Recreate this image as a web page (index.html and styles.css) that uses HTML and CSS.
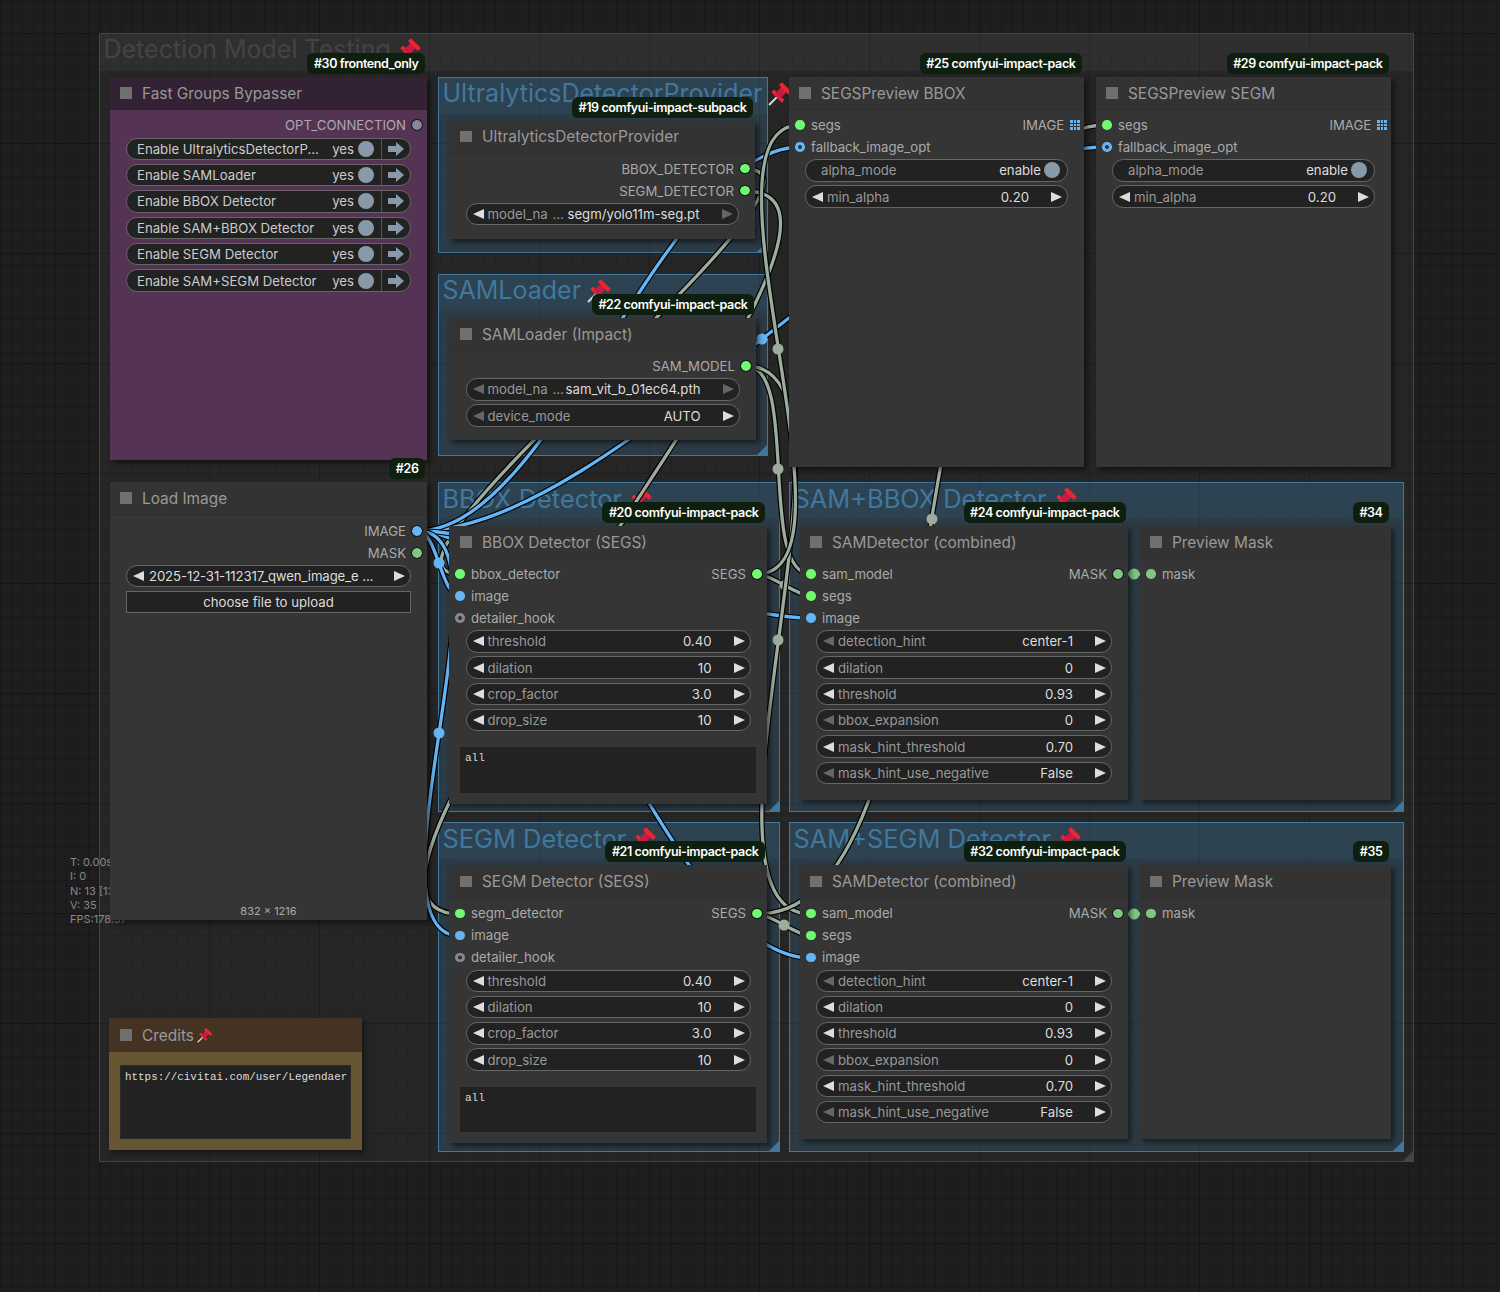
FILE: index.html
```html
<!DOCTYPE html>
<html lang="en">
<head>
<meta charset="utf-8">
<title>Detection Model Testing</title>
<link rel="stylesheet" href="styles.css">
</head>
<body>
<svg class="defs" aria-hidden="true">
  <symbol id="pin" viewBox="0 0 24 24">
    <line x1="1" y1="23" x2="9" y2="15" stroke="#d8d8d8" stroke-width="2"/>
    <line x1="4.5" y1="9.5" x2="14.5" y2="19.5" stroke="#f0242f" stroke-width="3.6"/>
    <line x1="9" y1="14.5" x2="16" y2="7.5" stroke="#c41c44" stroke-width="7"/>
    <line x1="12" y1="2.5" x2="21.5" y2="12" stroke="#f0242f" stroke-width="4"/>
  </symbol>
  <symbol id="go" viewBox="0 0 16 14">
    <path d="M0 4h8V0l8 7-8 7v-4H0z"/>
  </symbol>
</svg>
<main class="canvas">
  <section class="group outer g-main"><h2>Detection Model Testing<svg class="pin"><use href="#pin"/></svg></h2><i class="corner"></i></section>
  <section class="group g-ultra"><h2>UltralyticsDetectorProvider<svg class="pin"><use href="#pin"/></svg></h2><i class="corner"></i></section>
  <section class="group g-sam"><h2>SAMLoader<svg class="pin"><use href="#pin"/></svg></h2><i class="corner"></i></section>
  <section class="group g-bbox"><h2>BBOX Detector<svg class="pin"><use href="#pin"/></svg></h2><i class="corner"></i></section>
  <section class="group g-sambbox"><h2>SAM+BBOX Detector<svg class="pin"><use href="#pin"/></svg></h2><i class="corner"></i></section>
  <section class="group g-segm"><h2>SEGM Detector<svg class="pin"><use href="#pin"/></svg></h2><i class="corner"></i></section>
  <section class="group g-samsegm"><h2>SAM+SEGM Detector<svg class="pin"><use href="#pin"/></svg></h2><i class="corner"></i></section>

  <div class="stats"><div>T: 0.00s</div><div>I: 0</div><div>N: 13 [13]</div><div>V: 35</div><div>FPS:178.57</div></div>

  <svg class="links" viewBox="0 0 1500 1292" aria-hidden="true">
    <defs>
      <path id="b1" d="M418 531C437 531 441 596 460 596"/>
      <path id="b2" d="M418 531C520 531 358 936 460 936"/>
      <path id="b3" d="M418 531C518 531 710 618 811 618"/>
      <path id="b4" d="M418 531C563 531 666 958 811 958"/>
      <path id="b5" d="M418 531C553 531 665 147 800 147"/>
      <path id="b6" d="M418 531C615 531 909 147 1106 147"/>
      <path id="g1" d="M745 169C869 169 336 574 460 574"/>
      <path id="g2" d="M745 191C939 191 266 914 460 914"/>
      <path id="g3" d="M746 366C800 366 757 574 811 574"/>
      <path id="g4" d="M746 366C884 366 673 914 811 914"/>
      <path id="g5" d="M757 574C771 574 797 596 811 596"/>
      <path id="g6" d="M757 574C870 574 687 125 800 125"/>
      <path id="g7" d="M757 914C771 914 797 936 811 936"/>
      <path id="g8" d="M757 914C973 914 890 125 1106 125"/>
      <path id="m1" d="M1118 574H1150"/>
      <path id="m2" d="M1118 914H1150"/>
    </defs>
    <g class="wire-sage">
      <use class="casing" href="#g5"/><use href="#g5"/><circle cx="784" cy="585" r="4.5"/>
      <use class="casing" href="#g1"/><use href="#g1"/>
      <use class="casing" href="#g2"/><use href="#g2"/>
    </g>
    <g class="wire-blue">
      <use class="casing" href="#b6"/><use href="#b6"/>
      <use class="casing" href="#b5"/><use href="#b5"/>
      <use class="casing" href="#b4"/><use href="#b4"/>
      <use class="casing" href="#b3"/><use href="#b3"/>
      <use class="casing" href="#b2"/><use href="#b2"/>
      <use class="casing" href="#b1"/><use href="#b1"/>
    </g>
    <g class="wire-sage">
      <use class="casing" href="#g3"/><use href="#g3"/>
      <use class="casing" href="#g4"/><use href="#g4"/>
      <use class="casing" href="#g6"/><use href="#g6"/>
      <use class="casing" href="#g8"/><use href="#g8"/>
      <use class="casing" href="#g7"/><use href="#g7"/>
      <circle cx="778" cy="469" r="5.5"/>
      <circle cx="778" cy="640" r="5.5"/>
      <circle cx="778" cy="349" r="5.5"/>
      <circle cx="784" cy="925" r="5.5"/>
      <circle cx="932" cy="519" r="5.5"/>
    </g>
    <g class="wire-blue">
      <circle cx="762" cy="339" r="5.5"/>
      <circle cx="439" cy="733" r="5.5"/>
      <circle cx="439" cy="563" r="5.5"/>
    </g>
    <g class="wire-mask">
      <use href="#m1"/><circle cx="1134" cy="574" r="5.5"/>
      <use href="#m2"/><circle cx="1134" cy="914" r="5.5"/>
    </g>
  </svg>

  <article class="node purple n-fast">
    <header><i class="box"></i>Fast Groups Bypasser</header>
    <span class="badge">#30 frontend_only</span>
    <div class="slots">
      <div class="slot out"><span>OPT_CONNECTION</span><i class="dot ring grey"></i></div>
    </div>
    <div class="widgets">
      <div class="w bypass"><span class="name">Enable UltralyticsDetectorP...</span><span class="val">yes</span><i class="knob"></i><i class="split"></i><svg class="go"><use href="#go"/></svg></div>
      <div class="w bypass"><span class="name">Enable SAMLoader</span><span class="val">yes</span><i class="knob"></i><i class="split"></i><svg class="go"><use href="#go"/></svg></div>
      <div class="w bypass"><span class="name">Enable BBOX Detector</span><span class="val">yes</span><i class="knob"></i><i class="split"></i><svg class="go"><use href="#go"/></svg></div>
      <div class="w bypass"><span class="name">Enable SAM+BBOX Detector</span><span class="val">yes</span><i class="knob"></i><i class="split"></i><svg class="go"><use href="#go"/></svg></div>
      <div class="w bypass"><span class="name">Enable SEGM Detector</span><span class="val">yes</span><i class="knob"></i><i class="split"></i><svg class="go"><use href="#go"/></svg></div>
      <div class="w bypass"><span class="name">Enable SAM+SEGM Detector</span><span class="val">yes</span><i class="knob"></i><i class="split"></i><svg class="go"><use href="#go"/></svg></div>
    </div>
  </article>

  <article class="node n-ultra">
    <header><i class="box"></i>UltralyticsDetectorProvider</header>
    <span class="badge">#19 comfyui-impact-subpack</span>
    <div class="slots">
      <div class="slot out"><span>BBOX_DETECTOR</span><i class="dot ring green"></i></div>
      <div class="slot out"><span>SEGM_DETECTOR</span><i class="dot ring green"></i></div>
    </div>
    <div class="widgets">
      <div class="w"><i class="al"></i><span class="label">model_na</span><span class="more">…</span><span class="val">segm/yolo11m-seg.pt</span><i class="ar off"></i></div>
    </div>
  </article>

  <article class="node n-samload">
    <header><i class="box"></i>SAMLoader (Impact)</header>
    <span class="badge">#22 comfyui-impact-pack</span>
    <div class="slots">
      <div class="slot out"><span>SAM_MODEL</span><i class="dot ring green"></i></div>
    </div>
    <div class="widgets">
      <div class="w"><i class="al off"></i><span class="label">model_na</span><span class="more">…</span><span class="val">sam_vit_b_01ec64.pth</span><i class="ar off"></i></div>
      <div class="w"><i class="al off"></i><span class="label">device_mode</span><span class="val">AUTO</span><i class="ar"></i></div>
    </div>
  </article>

  <article class="node n-prev1">
    <header><i class="box"></i>SEGSPreview BBOX</header>
    <span class="badge">#25 comfyui-impact-pack</span>
    <div class="slots">
      <div class="slot both"><i class="dot green"></i><span>segs</span><span class="right">IMAGE</span><i class="grid"></i></div>
      <div class="slot"><i class="dot donut blue"></i><span>fallback_image_opt</span></div>
    </div>
    <div class="widgets">
      <div class="w flip"><span class="label">alpha_mode</span><span class="val">enable</span><i class="knob"></i></div>
      <div class="w"><i class="al"></i><span class="label">min_alpha</span><span class="val">0.20</span><i class="ar"></i></div>
    </div>
  </article>

  <article class="node n-prev2">
    <header><i class="box"></i>SEGSPreview SEGM</header>
    <span class="badge">#29 comfyui-impact-pack</span>
    <div class="slots">
      <div class="slot both"><i class="dot green"></i><span>segs</span><span class="right">IMAGE</span><i class="grid"></i></div>
      <div class="slot"><i class="dot donut blue"></i><span>fallback_image_opt</span></div>
    </div>
    <div class="widgets">
      <div class="w flip"><span class="label">alpha_mode</span><span class="val">enable</span><i class="knob"></i></div>
      <div class="w"><i class="al"></i><span class="label">min_alpha</span><span class="val">0.20</span><i class="ar"></i></div>
    </div>
  </article>

  <article class="node n-load">
    <header><i class="box"></i>Load Image</header>
    <span class="badge">#26</span>
    <div class="slots">
      <div class="slot out"><span>IMAGE</span><i class="dot ring blue"></i></div>
      <div class="slot out"><span>MASK</span><i class="dot ring mask"></i></div>
    </div>
    <div class="widgets">
      <div class="w"><i class="al"></i><span class="file">2025-12-31-112317_qwen_image_e ...</span><i class="ar"></i></div>
      <div class="upload">choose file to upload</div>
    </div>
    <div class="size">832 × 1216</div>
  </article>

  <article class="node n-bbox">
    <header><i class="box"></i>BBOX Detector (SEGS)</header>
    <span class="badge">#20 comfyui-impact-pack</span>
    <div class="slots">
      <div class="slot both"><i class="dot green"></i><span>bbox_detector</span><span class="right">SEGS</span><i class="dot ring green"></i></div>
      <div class="slot"><i class="dot blue"></i><span>image</span></div>
      <div class="slot"><i class="dot donut grey"></i><span>detailer_hook</span></div>
    </div>
    <div class="widgets">
      <div class="w"><i class="al"></i><span class="label">threshold</span><span class="val">0.40</span><i class="ar"></i></div>
      <div class="w"><i class="al"></i><span class="label">dilation</span><span class="val">10</span><i class="ar"></i></div>
      <div class="w"><i class="al"></i><span class="label">crop_factor</span><span class="val">3.0</span><i class="ar"></i></div>
      <div class="w"><i class="al"></i><span class="label">drop_size</span><span class="val">10</span><i class="ar"></i></div>
    </div>
    <div class="text">all</div>
  </article>

  <article class="node n-sam1">
    <header><i class="box"></i>SAMDetector (combined)</header>
    <span class="badge">#24 comfyui-impact-pack</span>
    <div class="slots">
      <div class="slot both"><i class="dot green"></i><span>sam_model</span><span class="right">MASK</span><i class="dot ring mask"></i></div>
      <div class="slot"><i class="dot green"></i><span>segs</span></div>
      <div class="slot"><i class="dot blue"></i><span>image</span></div>
    </div>
    <div class="widgets">
      <div class="w"><i class="al off"></i><span class="label">detection_hint</span><span class="val">center-1</span><i class="ar"></i></div>
      <div class="w"><i class="al"></i><span class="label">dilation</span><span class="val">0</span><i class="ar"></i></div>
      <div class="w"><i class="al"></i><span class="label">threshold</span><span class="val">0.93</span><i class="ar"></i></div>
      <div class="w"><i class="al off"></i><span class="label">bbox_expansion</span><span class="val">0</span><i class="ar"></i></div>
      <div class="w"><i class="al"></i><span class="label">mask_hint_threshold</span><span class="val">0.70</span><i class="ar"></i></div>
      <div class="w"><i class="al off"></i><span class="label">mask_hint_use_negative</span><span class="val">False</span><i class="ar"></i></div>
    </div>
  </article>

  <article class="node n-mask1">
    <header><i class="box"></i>Preview Mask</header>
    <span class="badge">#34</span>
    <div class="slots">
      <div class="slot"><i class="dot mask"></i><span>mask</span></div>
    </div>
  </article>

  <article class="node n-segm">
    <header><i class="box"></i>SEGM Detector (SEGS)</header>
    <span class="badge">#21 comfyui-impact-pack</span>
    <div class="slots">
      <div class="slot both"><i class="dot green"></i><span>segm_detector</span><span class="right">SEGS</span><i class="dot ring green"></i></div>
      <div class="slot"><i class="dot blue"></i><span>image</span></div>
      <div class="slot"><i class="dot donut grey"></i><span>detailer_hook</span></div>
    </div>
    <div class="widgets">
      <div class="w"><i class="al"></i><span class="label">threshold</span><span class="val">0.40</span><i class="ar"></i></div>
      <div class="w"><i class="al"></i><span class="label">dilation</span><span class="val">10</span><i class="ar"></i></div>
      <div class="w"><i class="al"></i><span class="label">crop_factor</span><span class="val">3.0</span><i class="ar"></i></div>
      <div class="w"><i class="al"></i><span class="label">drop_size</span><span class="val">10</span><i class="ar"></i></div>
    </div>
    <div class="text">all</div>
  </article>

  <article class="node n-sam2">
    <header><i class="box"></i>SAMDetector (combined)</header>
    <span class="badge">#32 comfyui-impact-pack</span>
    <div class="slots">
      <div class="slot both"><i class="dot green"></i><span>sam_model</span><span class="right">MASK</span><i class="dot ring mask"></i></div>
      <div class="slot"><i class="dot green"></i><span>segs</span></div>
      <div class="slot"><i class="dot blue"></i><span>image</span></div>
    </div>
    <div class="widgets">
      <div class="w"><i class="al off"></i><span class="label">detection_hint</span><span class="val">center-1</span><i class="ar"></i></div>
      <div class="w"><i class="al"></i><span class="label">dilation</span><span class="val">0</span><i class="ar"></i></div>
      <div class="w"><i class="al"></i><span class="label">threshold</span><span class="val">0.93</span><i class="ar"></i></div>
      <div class="w"><i class="al off"></i><span class="label">bbox_expansion</span><span class="val">0</span><i class="ar"></i></div>
      <div class="w"><i class="al"></i><span class="label">mask_hint_threshold</span><span class="val">0.70</span><i class="ar"></i></div>
      <div class="w"><i class="al off"></i><span class="label">mask_hint_use_negative</span><span class="val">False</span><i class="ar"></i></div>
    </div>
  </article>

  <article class="node n-mask2">
    <header><i class="box"></i>Preview Mask</header>
    <span class="badge">#35</span>
    <div class="slots">
      <div class="slot"><i class="dot mask"></i><span>mask</span></div>
    </div>
  </article>

  <article class="node brown n-credits">
    <header><i class="box"></i>Credits<svg class="pin small"><use href="#pin"/></svg></header>
    <div class="text">https://civitai.com/user/Legendaer</div>
  </article>
</main>
</body>
</html>
```

FILE: styles.css
```css
* { box-sizing: border-box; }
html, body { margin: 0; padding: 0; background: #1d1d1d; }
.defs { position: absolute; width: 0; height: 0; }

.canvas {
  position: relative;
  width: 1500px;
  height: 1292px;
  overflow: hidden;
  font-family: Inter, "Liberation Sans", sans-serif;
  background-color: #1e1e1e;
  background-image:
    linear-gradient(#151515 1px, transparent 1px),
    linear-gradient(90deg, #151515 1px, transparent 1px),
    linear-gradient(#191919 1px, transparent 1px),
    linear-gradient(90deg, #191919 1px, transparent 1px);
  background-size: 110px 110px, 110px 110px, 11px 11px, 11px 11px;
  background-position: 0 33px, 99px 0, 0 0, 0 0;
}

/* groups */
.group {
  position: absolute;
  border: 1.5px solid #3f789e;
  background: rgba(63, 120, 158, .27);
}
.group h2 {
  display: flex;
  align-items: center;
  height: 36px;
  margin: 0;
  padding: 0 0 5px 3.5px;
  font-size: 25px;
  font-weight: 400;
  line-height: 31px;
  color: #3f789e;
  background: rgba(63, 120, 158, .14);
  white-space: nowrap;
}
.g-bbox h2, .g-sambbox h2, .g-segm h2, .g-samsegm h2 { font-size: 25.4px; }
.group .corner {
  position: absolute;
  right: -1px;
  bottom: -1px;
  width: 12px;
  height: 12px;
  background: #3f789e;
  clip-path: polygon(100% 0, 100% 100%, 0 100%);
}
.pin { width: 25px; height: 25px; margin-left: 6px; flex: none; }
.pin.small { width: 16px; height: 16px; margin-left: 3px; }

.outer { border-color: #444; background: rgba(150, 150, 150, .07); }
.outer h2 { color: #444; background: rgba(150, 150, 150, .08); height: 37px; padding-bottom: 6px; }
.outer .corner { background: #444; }

.g-main { left: 99px; top: 33px; width: 1315px; height: 1129px; }
.g-ultra { left: 438px; top: 77px; width: 330px; height: 176px; }
.g-sam { left: 438px; top: 274px; width: 330px; height: 182px; }
.g-bbox { left: 438px; top: 482px; width: 342px; height: 330px; }
.g-sambbox { left: 789px; top: 482px; width: 615px; height: 330px; }
.g-segm { left: 438px; top: 822px; width: 342px; height: 330px; }
.g-samsegm { left: 789px; top: 822px; width: 615px; height: 330px; }

.stats {
  position: absolute;
  left: 70px;
  top: 855px;
  font-size: 11px;
  line-height: 14.3px;
  color: #888;
}

/* links */
.links { position: absolute; left: 0; top: 0; width: 1500px; height: 1292px; fill: none; stroke-width: 3.3px; }
.links .casing { stroke: #000; stroke-width: 5.6px; }
.wire-blue { stroke: #64b5f6; }
.wire-blue circle { fill: #64b5f6; stroke: none; }
.wire-sage { stroke: #9dad9d; }
.wire-sage circle { fill: #9dad9d; stroke: none; }
.wire-mask { stroke: #81c784; }
.wire-mask circle { fill: #81c784; stroke: none; }

/* nodes */
.node {
  position: absolute;
  display: flex;
  flex-direction: column;
  font-size: 13.2px;
  color: #aaa;
  background: #353535;
  box-shadow: 3px 3px 5px rgba(0, 0, 0, .5);
}
.node header {
  display: flex;
  align-items: center;
  flex: none;
  height: 33px;
  padding-left: 10px;
  font-size: 15.4px;
  color: #999;
  background: #333;
  border-bottom: 1px solid #2e2e2e;
  white-space: nowrap;
}
.n-ultra header, .n-samload header, .n-bbox header, .n-segm header { padding-left: 11px; }
.box { width: 11.5px; height: 11.5px; margin-right: 10.5px; background: #707070; flex: none; }

.purple { background: #553355; }
.purple header { background: #332233; border-bottom-color: #2e1e2e; }
.brown { background: #665533; }
.brown header { height: 34px; padding: 1px 0 0 11px; background: #443322; border-bottom-color: #3e2e1e; }

.n-fast { left: 110px; top: 77px; width: 317px; height: 383px; }
.n-ultra { left: 449px; top: 120.5px; width: 306px; height: 118.5px; }
.n-samload { left: 449px; top: 318px; width: 307px; height: 122px; }
.n-prev1 { left: 789px; top: 77px; width: 295px; height: 390px; }
.n-prev2 { left: 1096px; top: 77px; width: 295px; height: 390px; }
.n-load { left: 110px; top: 482px; width: 317px; height: 438px; }
.n-bbox { left: 449px; top: 526px; width: 318px; height: 278px; }
.n-sam1 { left: 800px; top: 526px; width: 328px; height: 274px; }
.n-mask1 { left: 1140px; top: 526px; width: 251px; height: 274px; }
.n-segm { left: 449px; top: 865.4px; width: 318px; height: 277.6px; }
.n-sam2 { left: 800px; top: 865.4px; width: 328px; height: 273.6px; }
.n-mask2 { left: 1140px; top: 865.4px; width: 251px; height: 273.6px; }
.n-credits { left: 109px; top: 1018px; width: 253px; height: 132px; box-shadow: 3px 3px 5px rgba(0, 0, 0, .4); }

.badge {
  position: absolute;
  right: 2px;
  bottom: calc(100% + 3px);
  height: 21px;
  padding: 0 6.5px;
  border-radius: 6px;
  font-size: 12.5px;
  font-weight: 600;
  line-height: 21px;
  letter-spacing: -.4px;
  color: #fff;
  background: #0f1f0f;
  white-space: nowrap;
}

.slots { display: flex; flex-direction: column; padding-top: 4px; flex: none; }
.n-load .slots { padding-top: 5px; }
.n-load .widgets { padding-top: .5px; }
.slot { display: flex; align-items: center; height: 22px; padding: 0 5.25px 0 6.25px; white-space: nowrap; }
.slot.out { justify-content: flex-end; }
.slot.out .dot { margin: 0 0 0 6.25px; }
.slot .right { margin-left: auto; }
.slot .right + .dot { margin: 0 0 0 6.25px; }
.dot { width: 9.5px; height: 9.5px; margin-right: 6.25px; border-radius: 50%; flex: none; }
.green { background: #6ffb6f; }
.blue { background: #64b5f6; }
.mask { background: #81c784; }
.grey { background: #878797; }
.ring { outline: 1.5px solid #111; }
.donut.blue { background: radial-gradient(circle, #353535 0 1.8px, #64b5f6 2.2px); }
.donut.grey { background: radial-gradient(circle, #353535 0 1.8px, #878797 2.2px); }
.grid {
  width: 10px;
  height: 10px;
  margin: 0 -1px 0 5.5px;
  background:
    repeating-linear-gradient(90deg, transparent 0 2.6px, #353535 2.6px 3.7px),
    repeating-linear-gradient(0deg, transparent 0 2.6px, #353535 2.6px 3.7px),
    #64b5f6;
  flex: none;
}

.widgets { display: flex; flex-direction: column; gap: 3.9px; padding: 1.2px 16px 0; flex: none; }
.n-fast .widgets { gap: 4px; padding-top: 1.5px; }
.n-ultra .widgets, .n-samload .widgets, .n-bbox .widgets, .n-segm .widgets { padding-left: 16.5px; padding-right: 16.5px; }
.w {
  display: flex;
  align-items: center;
  height: 22.4px;
  padding: 0 5px 0 6px;
  border: 1px solid #666;
  border-radius: 11.2px;
  background: #222;
  white-space: nowrap;
  flex: none;
}
.w .label { margin-left: 4px; color: #999; }
.w .more { margin-left: 5px; color: #999; }
.w .val { margin-left: auto; margin-right: 22px; color: #ddd; }
.al, .ar { width: 0; height: 0; border-style: solid; flex: none; }
.al { border-width: 5.5px 11px 5.5px 0; border-color: transparent #ddd transparent transparent; }
.ar { border-width: 5.5px 0 5.5px 11px; border-color: transparent transparent transparent #ddd; }
.al.off { border-right-color: #666; }
.ar.off { border-left-color: #666; }

.flip { padding: 0 7px 0 11px; }
.flip .val { margin-right: 3px; }
.flip .label { margin-left: 4px; }
.knob { width: 16px; height: 16px; border-radius: 50%; background: #8899aa; flex: none; }

.bypass { padding: 0 6px 0 10px; }
.bypass .name { flex: 1; min-width: 0; color: #ccc; }
.w.bypass .val { margin: 0 4px 0 0; color: #ccc; }
.split { width: 1px; align-self: stretch; margin: 0 6px 0 7px; background: #555; }
.go { width: 16px; height: 14px; fill: #8899aa; flex: none; }

.file { flex: 1; margin-left: 5px; letter-spacing: -.12px; color: #ddd; }
.upload {
  display: flex;
  align-items: center;
  justify-content: center;
  height: 22.4px;
  border: 1px solid #666;
  background: #222;
  color: #ddd;
}
.size {
  margin-top: auto;
  padding-bottom: 2px;
  text-align: center;
  font-size: 11px;
  line-height: 14px;
  color: #aaa;
}

.text {
  flex: 1;
  margin: 16px 11px 11px;
  padding: 5px;
  font-family: "Liberation Mono", monospace;
  font-size: 11px;
  line-height: 13px;
  color: #ddd;
  background: #222;
  white-space: nowrap;
  overflow: hidden;
}
.n-credits .text { margin: 13px 11px 11px; padding: 5px 4px; font-size: 10.9px; border: 1px solid #2b2b2b; }
```
